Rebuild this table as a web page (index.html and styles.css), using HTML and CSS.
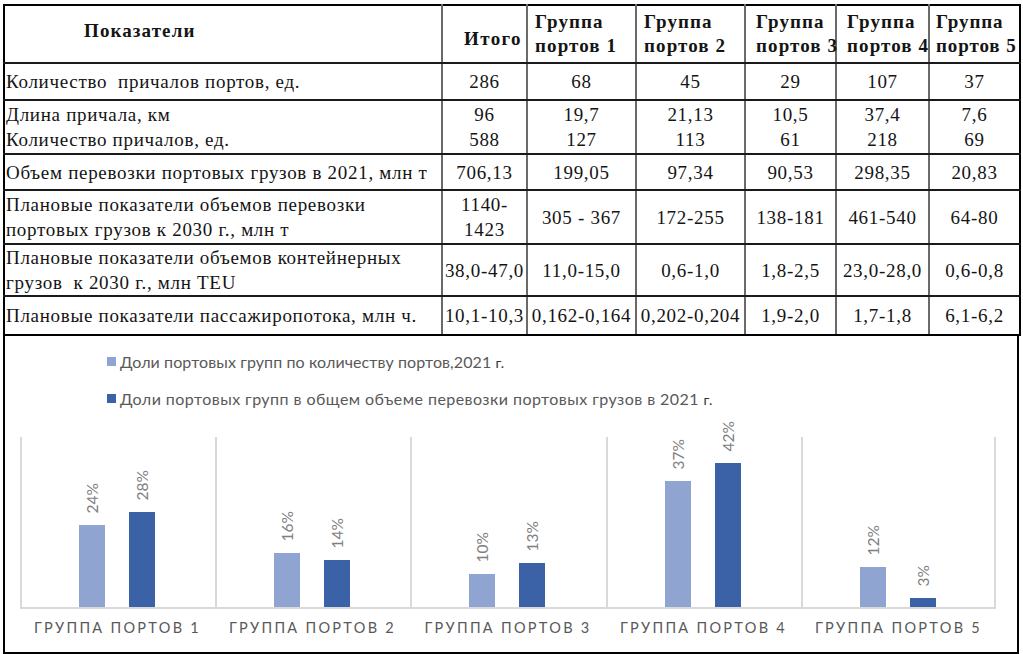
FILE: index.html
```html
<!DOCTYPE html>
<html lang="ru">
<head>
<meta charset="utf-8">
<title>Портовые группы</title>
<link rel="stylesheet" href="styles.css">
</head>
<body>
<div class="page">
  <table class="data">
    <colgroup>
      <col class="c0"><col class="c1"><col class="c2"><col class="c3"><col class="c4"><col class="c5"><col class="c6">
    </colgroup>
    <thead>
      <tr class="rh">
        <th class="h-title">Показатели</th>
        <th class="h-total">Итого</th>
        <th class="h-group">Группа<br>портов 1</th>
        <th class="h-group">Группа<br>портов 2</th>
        <th class="h-group h-wide">Группа<br>портов 3</th>
        <th class="h-group h-wide">Группа<br>портов 4</th>
        <th class="h-group h-last">Группа<br>портов 5</th>
      </tr>
    </thead>
    <tbody>
      <tr class="r1">
        <td class="lbl">Количество&nbsp; причалов портов, ед.</td>
        <td>286</td><td>68</td><td>45</td><td>29</td><td>107</td><td>37</td>
      </tr>
      <tr class="r2">
        <td class="lbl">Длина причала, км<br>Количество причалов, ед.</td>
        <td>96<br>588</td><td>19,7<br>127</td><td>21,13<br>113</td><td>10,5<br>61</td><td>37,4<br>218</td><td>7,6<br>69</td>
      </tr>
      <tr class="r3">
        <td class="lbl">Объем перевозки портовых грузов в 2021, млн т</td>
        <td>706,13</td><td>199,05</td><td>97,34</td><td>90,53</td><td>298,35</td><td>20,83</td>
      </tr>
      <tr class="r4">
        <td class="lbl">Плановые показатели объемов перевозки<br>портовых грузов к 2030 г., млн т</td>
        <td>1140-<br>1423</td><td>305 - 367</td><td>172-255</td><td>138-181</td><td>461-540</td><td>64-80</td>
      </tr>
      <tr class="r5">
        <td class="lbl">Плановые показатели объемов контейнерных<br>грузов&nbsp; к 2030 г., млн TEU</td>
        <td>38,0-47,0</td><td>11,0-15,0</td><td>0,6-1,0</td><td>1,8-2,5</td><td>23,0-28,0</td><td>0,6-0,8</td>
      </tr>
      <tr class="r6">
        <td class="lbl">Плановые показатели пассажиропотока, млн ч.</td>
        <td>10,1-10,3</td><td>0,162-0,164</td><td>0,202-0,204</td><td>1,9-2,0</td><td>1,7-1,8</td><td>6,1-6,2</td>
      </tr>
    </tbody>
  </table>

  <div class="chart">
    <div class="legend">
      <div class="legend-item"><span class="swatch light"></span><span>Доли портовых групп по количеству портов,2021 <span class="yr">г.</span></span></div>
      <div class="legend-item wide"><span class="swatch dark"></span><span>Доли портовых групп в общем объеме перевозки портовых грузов в 2021 <span class="yr">г.</span></span></div>
    </div>
    <div class="plot">
      <div class="group">
        <div class="bar-col"><span class="val">24%</span><div class="bar light" style="height:82px"></div></div>
        <div class="bar-col"><span class="val">28%</span><div class="bar dark" style="height:95px"></div></div>
      </div>
      <div class="group">
        <div class="bar-col"><span class="val">16%</span><div class="bar light" style="height:54px"></div></div>
        <div class="bar-col"><span class="val">14%</span><div class="bar dark" style="height:47px"></div></div>
      </div>
      <div class="group">
        <div class="bar-col"><span class="val">10%</span><div class="bar light" style="height:33px"></div></div>
        <div class="bar-col"><span class="val">13%</span><div class="bar dark" style="height:44px"></div></div>
      </div>
      <div class="group">
        <div class="bar-col"><span class="val">37%</span><div class="bar light" style="height:126px"></div></div>
        <div class="bar-col"><span class="val">42%</span><div class="bar dark" style="height:144px"></div></div>
      </div>
      <div class="group last">
        <div class="bar-col"><span class="val">12%</span><div class="bar light" style="height:40px"></div></div>
        <div class="bar-col"><span class="val">3%</span><div class="bar dark" style="height:9px"></div></div>
      </div>
    </div>
    <div class="cats">
      <div class="cat">ГРУППА ПОРТОВ 1</div>
      <div class="cat">ГРУППА ПОРТОВ 2</div>
      <div class="cat">ГРУППА ПОРТОВ 3</div>
      <div class="cat">ГРУППА ПОРТОВ 4</div>
      <div class="cat">ГРУППА ПОРТОВ 5</div>
    </div>
  </div>
</div>
</body>
</html>
```
FILE: styles.css
```css
* { box-sizing: border-box; }

body {
  margin: 0;
  background: #ffffff;
}

.page {
  padding: 4px 0 0 3px;
  width: 1023px;
}

/* ---------- table ---------- */
.data {
  border-collapse: collapse;
  table-layout: fixed;
  width: 1016px;
  font-family: "Liberation Serif", "Tinos", "Times New Roman", serif;
  font-size: 19px;
  letter-spacing: 0.7px;
  color: #141414;
}

.c0 { width: 438px; }
.c1 { width: 85px; }
.c2 { width: 109px; }
.c3 { width: 109px; }
.c4 { width: 91px; }
.c5 { width: 93px; }
.c6 { width: 91px; }

.data th,
.data td {
  padding: 0;
  text-align: center;
  vertical-align: middle;
  line-height: 25px;
  border-top: 2px solid #1a1a1a;
  border-bottom: 2px solid #1a1a1a;
  border-left: 2px solid #6a6a6a;
  border-right: 2px solid #6a6a6a;
  white-space: nowrap;
  overflow: visible;
}

.data tr > :first-child { border-left-color: #000; }
.data tr > :last-child { border-right-color: #000; }
.data thead th { border-top-color: #000; }
.data tbody tr:last-child td { border-bottom-color: #000; }

.data th {
  font-weight: bold;
  line-height: 24px;
  letter-spacing: 1.1px;
}

.rh { height: 58px; }
.r1 { height: 37px; }
.r2 { height: 54px; }
.r3 { height: 36px; }
.r4 { height: 54px; }
.r5 { height: 51px; }
.r6 { height: 39px; }

.data th.h-title {
  text-align: left;
  padding-left: 79px;
  padding-bottom: 6px;
}

.data th.h-total {
  text-align: right;
  padding: 9px 4px 0 0;
  letter-spacing: 1.4px;
}

.data th.h-group {
  text-align: left;
  padding-left: 7px;
}

.data th.h-wide { padding-left: 10px; }
.data th.h-last { padding-left: 6px; letter-spacing: 0.9px; }

.data td.lbl {
  text-align: left;
  padding-left: 1px;
}

/* ---------- chart ---------- */
.chart {
  width: 1016px;
  height: 318px;
  border: 2px solid #000;
  border-top: none;
  font-family: "Lato", "Open Sans", sans-serif;
  color: #595959;
}

.legend {
  display: flex;
  flex-direction: column;
  gap: 19px;
  padding: 16px 0 0 102px;
}

.legend-item {
  display: flex;
  align-items: center;
  gap: 4px;
  height: 18px;
  font-size: 16px;
  letter-spacing: 0.1px;
  white-space: nowrap;
}

.legend-item.wide {
  letter-spacing: 0.45px;
}

.yr {
  font-size: 14px;
  color: #333;
}

.swatch {
  width: 9px;
  height: 9px;
  flex: none;
}

.light { background: #8fa4d1; }
.dark { background: #3b62a7; }

.plot {
  margin: 30px 0 0 15px;
  display: grid;
  grid-template-columns: 195px 195px 196px 195px 195px;
  grid-template-rows: 172px;
  height: 172px;
}

.group {
  display: flex;
  align-items: flex-end;
  gap: 24px;
  padding-left: 57px;
  height: 172px;
  border-left: 2px solid #d9d9d9;
  border-bottom: 2px solid #d9d9d9;
}

.group.last {
  border-right: 2px solid #d9d9d9;
}

.bar-col {
  width: 26px;
  display: flex;
  flex-direction: column;
  align-items: center;
}

.val {
  writing-mode: vertical-rl;
  transform: rotate(180deg);
  font-size: 15.5px;
  line-height: 17px;
  color: #7f7f7f;
  margin-bottom: 12px;
  white-space: nowrap;
}

.bar {
  width: 26px;
}

.cats {
  margin: 10px 0 0 15px;
  display: grid;
  grid-template-columns: 195px 195px 196px 195px 195px;
}

.cat {
  text-align: center;
  font-size: 14.5px;
  line-height: 18px;
  letter-spacing: 2.3px;
  color: #595959;
}
```
